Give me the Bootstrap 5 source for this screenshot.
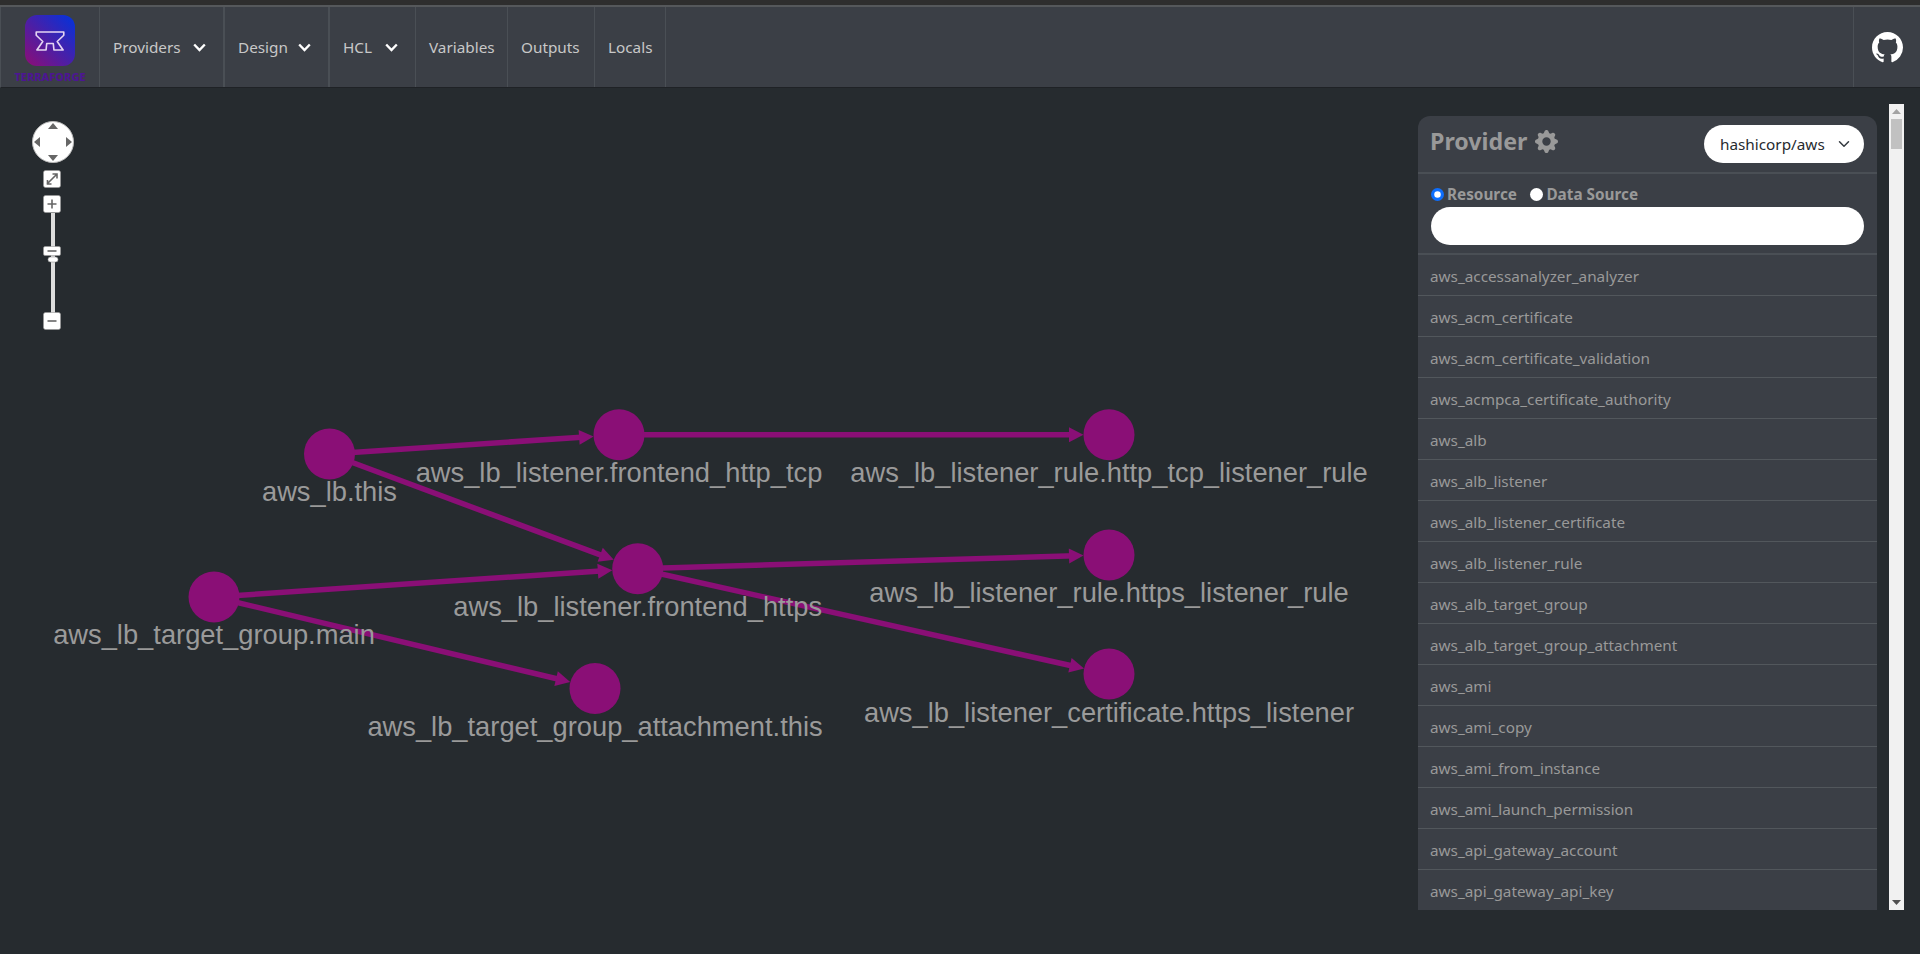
<!DOCTYPE html>
<html lang="en">
<head>
<meta charset="utf-8">
<title>Terraforge</title>
<link href="https://cdn.jsdelivr.net/npm/bootstrap@5.3.0/dist/css/bootstrap.min.css" rel="stylesheet">
<style>
html,body{height:100%;overflow:hidden}
body{background:#262b2f;font-family:"Noto Sans","Open Sans",sans-serif;color:#aaa}
.topstrip{height:7px;background:#2e2e2e;border-bottom:2px solid #55585b}
.tf-nav{height:81px;padding:0;background:#3b3f46;border-left:1px solid #4a4f55;border-bottom:1px solid #1f2226;align-items:stretch;flex-wrap:nowrap}
.tf-nav .navbar-nav{align-items:stretch}
.tf-item{display:flex;align-items:stretch;border-right:1px solid #4a4f55}
.tf-nav .navbar-nav .nav-link{display:flex;flex:1;align-items:center;padding:0 13px;color:#c8c8c8;font-size:15.3px}
.tf-chev{margin:0 4.5px 0 auto}
.tf-wide{border-right-width:2px}
.tf-w1{width:125px}.tf-w2{width:105px}.tf-w3{width:86px}.tf-w4{width:92px}.tf-w5{width:87px}.tf-w6{width:71px}
.tf-logo{width:99px;display:flex;flex-direction:column;align-items:center;padding-top:8px;border-right:1px solid #4a4f55}
.tf-logobox{width:50px;height:51px;border-radius:12px;background:linear-gradient(to top right,#8e0d75,#0033dd);display:flex;align-items:center;justify-content:center}
.tf-logotext{font-size:11px;font-weight:800;line-height:13px;color:#4d1593;margin-top:4px}
.tf-gh{width:67px;border-left:1px solid #4a4f55;display:flex;align-items:center;justify-content:center}
.tf-main{height:866px;position:relative}
.tf-canvas{display:block;width:1406px;height:866px}
.tf-label{font-family:"Liberation Sans",sans-serif;font-size:27.3px;fill:#9a9a9a;text-anchor:middle}
.tf-side{position:absolute;left:1406px;top:16px;width:498px;height:806px;display:flex}
.tf-pane{width:483px;padding:12px 12px 0;overflow:hidden}
.tf-bar{width:15px;background:#f1f1f1;display:flex;flex-direction:column;align-items:center}
.tf-btn{width:15px;height:15px;flex:none;display:flex;align-items:center;justify-content:center}
.tf-thumb{width:11px;height:30px;background:#c1c1c1;flex:none}
.tf-track{flex:1}
.tf-panel{background:#3b3f46;border-radius:12px 12px 0 0;height:794px;overflow:hidden}
.tf-head{height:58px;padding:9px 13px 0 12px;border-bottom:2px solid #4a4f55}
.tf-title{font-size:23.2px;font-weight:700;color:#999;line-height:30px;margin-top:1px}
.tf-select{width:160px;height:38px;border:0;font-size:15.3px;color:#272b30;padding-left:16px;background-color:#fff}
.tf-filter{height:81px;padding:10px 13px 0;border-bottom:2px solid #4a4f55}
.tf-filter .form-check{margin:0 13.5px 0 0;padding:0;min-height:0;display:flex;align-items:center;gap:3px}
.tf-filter .form-check-input{float:none;margin:0;width:13px;height:13px;border:0}
.tf-filter .form-check-label{font-size:15.3px;font-weight:700;color:#999;line-height:20px}
.tf-search{height:38px;border:0;margin-top:3px}
.tf-list{border-radius:0}
.tf-list .list-group-item{background:transparent;color:#999;border:0;border-bottom:1px solid #52575c;height:41px;padding:2px 12px 0;display:flex;align-items:center;font-size:15.3px}
</style>
</head>
<body>
<div class="topstrip"></div>
<nav class="navbar navbar-expand tf-nav">
  <div class="tf-logo"><div class="tf-logobox">
    <svg width="30" height="20" viewBox="105 90 90 61" fill="none" stroke="#e4d4f2" stroke-width="5" stroke-linejoin="round"><path d="M108 93H192V103L172 122 190 148H162L160 128H140L138 148H110L128 122 108 103Z"/></svg>
  </div><div class="tf-logotext">TERRAFORGE</div></div>
  <ul class="navbar-nav flex-row me-auto">
    <li class="nav-item tf-item tf-wide tf-w1"><a class="nav-link" href="#">Providers <svg class="tf-chev" width="13" height="9" viewBox="0 0 13 9" fill="none" stroke="#fff" stroke-width="2.4"><path d="M1.2 1.5 6.5 7 11.8 1.5"/></svg></a></li>
    <li class="nav-item tf-item tf-wide tf-w2"><a class="nav-link" href="#">Design <svg class="tf-chev" width="13" height="9" viewBox="0 0 13 9" fill="none" stroke="#fff" stroke-width="2.4"><path d="M1.2 1.5 6.5 7 11.8 1.5"/></svg></a></li>
    <li class="nav-item tf-item tf-w3"><a class="nav-link" href="#">HCL <svg class="tf-chev" width="13" height="9" viewBox="0 0 13 9" fill="none" stroke="#fff" stroke-width="2.4"><path d="M1.2 1.5 6.5 7 11.8 1.5"/></svg></a></li>
    <li class="nav-item tf-item tf-w4"><a class="nav-link" href="#">Variables</a></li>
    <li class="nav-item tf-item tf-w5"><a class="nav-link" href="#">Outputs</a></li>
    <li class="nav-item tf-item tf-w6"><a class="nav-link" href="#">Locals</a></li>
  </ul>
  <div class="tf-gh"><svg width="31" height="31" viewBox="0 0 16 16" fill="#fff"><path d="M8 0C3.58 0 0 3.58 0 8c0 3.54 2.29 6.53 5.47 7.59.4.07.55-.17.55-.38 0-.19-.01-.82-.01-1.49-2.01.37-2.53-.49-2.69-.94-.09-.23-.48-.94-.82-1.13-.28-.15-.68-.52-.01-.53.63-.01 1.08.58 1.23.82.72 1.21 1.87.87 2.33.66.07-.52.28-.87.51-1.07-1.78-.2-3.64-.89-3.64-3.95 0-.87.31-1.59.82-2.15-.08-.2-.36-1.02.08-2.12 0 0 .67-.21 2.2.82.64-.18 1.32-.27 2-.27.68 0 1.36.09 2 .27 1.53-1.04 2.2-.82 2.2-.82.44 1.1.16 1.92.08 2.12.51.56.82 1.27.82 2.15 0 3.07-1.87 3.75-3.65 3.95.29.25.54.73.54 1.48 0 1.07-.01 1.93-.01 2.2 0 .21.15.46.55.38A8.013 8.013 0 0 0 16 8c0-4.42-3.58-8-8-8z"/></svg></div>
</nav>
<main class="tf-main">
  <svg class="tf-canvas" viewBox="0 88 1406 866">
    <defs><polygon id="tfarrow" points="0,0 -14.5,-7.5 -14.5,7.5" fill="#8a0f76"/></defs>
    <g stroke="#8a0f76" stroke-width="5.5" fill="none">
      <line x1="329.5" y1="454" x2="585" y2="437"/>
      <line x1="329.5" y1="454" x2="605" y2="556.7"/>
      <line x1="214" y1="597" x2="604" y2="570.8"/>
      <line x1="214" y1="597" x2="562" y2="680"/>
      <line x1="619" y1="434.7" x2="1075" y2="434.7"/>
      <line x1="637.7" y1="568.7" x2="1075" y2="555.8"/>
      <line x1="637.7" y1="568.7" x2="1076" y2="666.8"/>
    </g>
    <use href="#tfarrow" transform="translate(593.6 436.4) rotate(-3.8)"/>
    <use href="#tfarrow" transform="translate(613.8 559.8) rotate(20.3)"/>
    <use href="#tfarrow" transform="translate(612.3 570.3) rotate(-3.9)"/>
    <use href="#tfarrow" transform="translate(570.2 682) rotate(13.4)"/>
    <use href="#tfarrow" transform="translate(1083.5 434.7)"/>
    <use href="#tfarrow" transform="translate(1083.5 555.5) rotate(-1.7)"/>
    <use href="#tfarrow" transform="translate(1084.1 668.4) rotate(12.7)"/>
    <g fill="#8a0f76">
      <circle cx="329.5" cy="454" r="25.5"/><circle cx="619" cy="434.7" r="25.5"/><circle cx="637.7" cy="568.7" r="25.5"/>
      <circle cx="214" cy="597" r="25.5"/><circle cx="595" cy="688.5" r="25.5"/><circle cx="1109" cy="434.7" r="25.5"/>
      <circle cx="1109" cy="555" r="25.5"/><circle cx="1109" cy="674" r="25.5"/>
    </g>
    <text class="tf-label" x="329.5" y="501">aws_lb.this</text>
    <text class="tf-label" x="619" y="481.7">aws_lb_listener.frontend_http_tcp</text>
    <text class="tf-label" x="637.7" y="615.5">aws_lb_listener.frontend_https</text>
    <text class="tf-label" x="214" y="644">aws_lb_target_group.main</text>
    <text class="tf-label" x="595" y="735.5">aws_lb_target_group_attachment.this</text>
    <text class="tf-label" x="1109" y="481.7">aws_lb_listener_rule.http_tcp_listener_rule</text>
    <text class="tf-label" x="1109" y="602">aws_lb_listener_rule.https_listener_rule</text>
    <text class="tf-label" x="1109" y="721.5">aws_lb_listener_certificate.https_listener</text>
    <g>
      <circle cx="53" cy="142" r="20.5" fill="#fff" stroke="#bbb" stroke-width="1"/>
      <g fill="#666">
        <polygon points="53,123 48,129 58,129"/><polygon points="53,161 48,155 58,155"/>
        <polygon points="34,142 40,137 40,147"/><polygon points="72,142 66,137 66,147"/>
      </g>
      <rect x="51" y="213" width="4" height="100" fill="#ddd"/>
      <g fill="#fff" stroke="#999" stroke-width=".6">
        <rect x="43.5" y="170.5" width="17" height="17" rx="2"/>
        <rect x="43.5" y="195.5" width="17" height="17" rx="2"/>
        <rect x="43.5" y="246.5" width="17" height="9" rx="1.5"/>
        <rect x="48" y="257" width="10" height="5" rx="2.5"/>
        <rect x="43.5" y="312.5" width="17" height="17" rx="2"/>
      </g>
      <g stroke="#666" stroke-width="1.6" fill="none">
        <path d="M47 184 57 174M47.5 180V184H51.5M52.5 174H57V178.5"/>
        <path d="M47.5 204H56.5M52 199.5V208.5"/>
        <path d="M47.5 251H56.5"/>
        <path d="M47.5 321H56.5"/>
      </g>
    </g>
  </svg>
  <aside class="tf-side">
    <div class="tf-pane">
    <div class="tf-panel">
      <div class="tf-head d-flex justify-content-between align-items-start">
        <div class="tf-title d-flex align-items-center gap-2">Provider
          <svg width="23" height="23" viewBox="0 0 16 16" fill="#999"><path d="M9.405 1.05c-.413-1.4-2.397-1.4-2.81 0l-.1.34a1.464 1.464 0 0 1-2.105.872l-.31-.17c-1.283-.698-2.686.705-1.987 1.987l.169.311c.446.82.023 1.841-.872 2.105l-.34.1c-1.4.413-1.4 2.397 0 2.81l.34.1a1.464 1.464 0 0 1 .872 2.105l-.17.31c-.698 1.283.705 2.686 1.987 1.987l.311-.169a1.464 1.464 0 0 1 2.105.872l.1.34c.413 1.4 2.397 1.4 2.81 0l.1-.34a1.464 1.464 0 0 1 2.105-.872l.31.17c1.283.698 2.686-.705 1.987-1.987l-.169-.311a1.464 1.464 0 0 1 .872-2.105l.34-.1c1.4-.413 1.4-2.397 0-2.81l-.34-.1a1.464 1.464 0 0 1-.872-2.105l.17-.31c.698-1.283-.705-2.686-1.987-1.987l-.311.169a1.464 1.464 0 0 1-2.105-.872l-.1-.34zM8 10.93a2.929 2.929 0 1 1 0-5.86 2.929 2.929 0 0 1 0 5.858z"/></svg>
        </div>
        <select class="form-select rounded-pill tf-select"><option>hashicorp/aws</option></select>
      </div>
      <div class="tf-filter">
        <div class="d-flex">
          <div class="form-check"><input class="form-check-input" type="radio" name="k" id="r1" checked><label class="form-check-label" for="r1">Resource</label></div>
          <div class="form-check"><input class="form-check-input" type="radio" name="k" id="r2"><label class="form-check-label" for="r2">Data Source</label></div>
        </div>
        <input class="form-control rounded-pill tf-search" type="text" aria-label="Filter">
      </div>
      <ul class="list-group tf-list">
        <li class="list-group-item">aws_accessanalyzer_analyzer</li>
        <li class="list-group-item">aws_acm_certificate</li>
        <li class="list-group-item">aws_acm_certificate_validation</li>
        <li class="list-group-item">aws_acmpca_certificate_authority</li>
        <li class="list-group-item">aws_alb</li>
        <li class="list-group-item">aws_alb_listener</li>
        <li class="list-group-item">aws_alb_listener_certificate</li>
        <li class="list-group-item">aws_alb_listener_rule</li>
        <li class="list-group-item">aws_alb_target_group</li>
        <li class="list-group-item">aws_alb_target_group_attachment</li>
        <li class="list-group-item">aws_ami</li>
        <li class="list-group-item">aws_ami_copy</li>
        <li class="list-group-item">aws_ami_from_instance</li>
        <li class="list-group-item">aws_ami_launch_permission</li>
        <li class="list-group-item">aws_api_gateway_account</li>
        <li class="list-group-item">aws_api_gateway_api_key</li>
      </ul>
    </div>
    </div>
    <div class="tf-bar">
      <div class="tf-btn"><svg width="9" height="5" viewBox="0 0 9 5" fill="#a3a3a3"><polygon points="4.5,0 9,5 0,5"/></svg></div>
      <div class="tf-thumb"></div>
      <div class="tf-track"></div>
      <div class="tf-btn"><svg width="9" height="5" viewBox="0 0 9 5" fill="#505050"><polygon points="0,0 9,0 4.5,5"/></svg></div>
    </div>
  </aside>
</main>
</body>
</html>
